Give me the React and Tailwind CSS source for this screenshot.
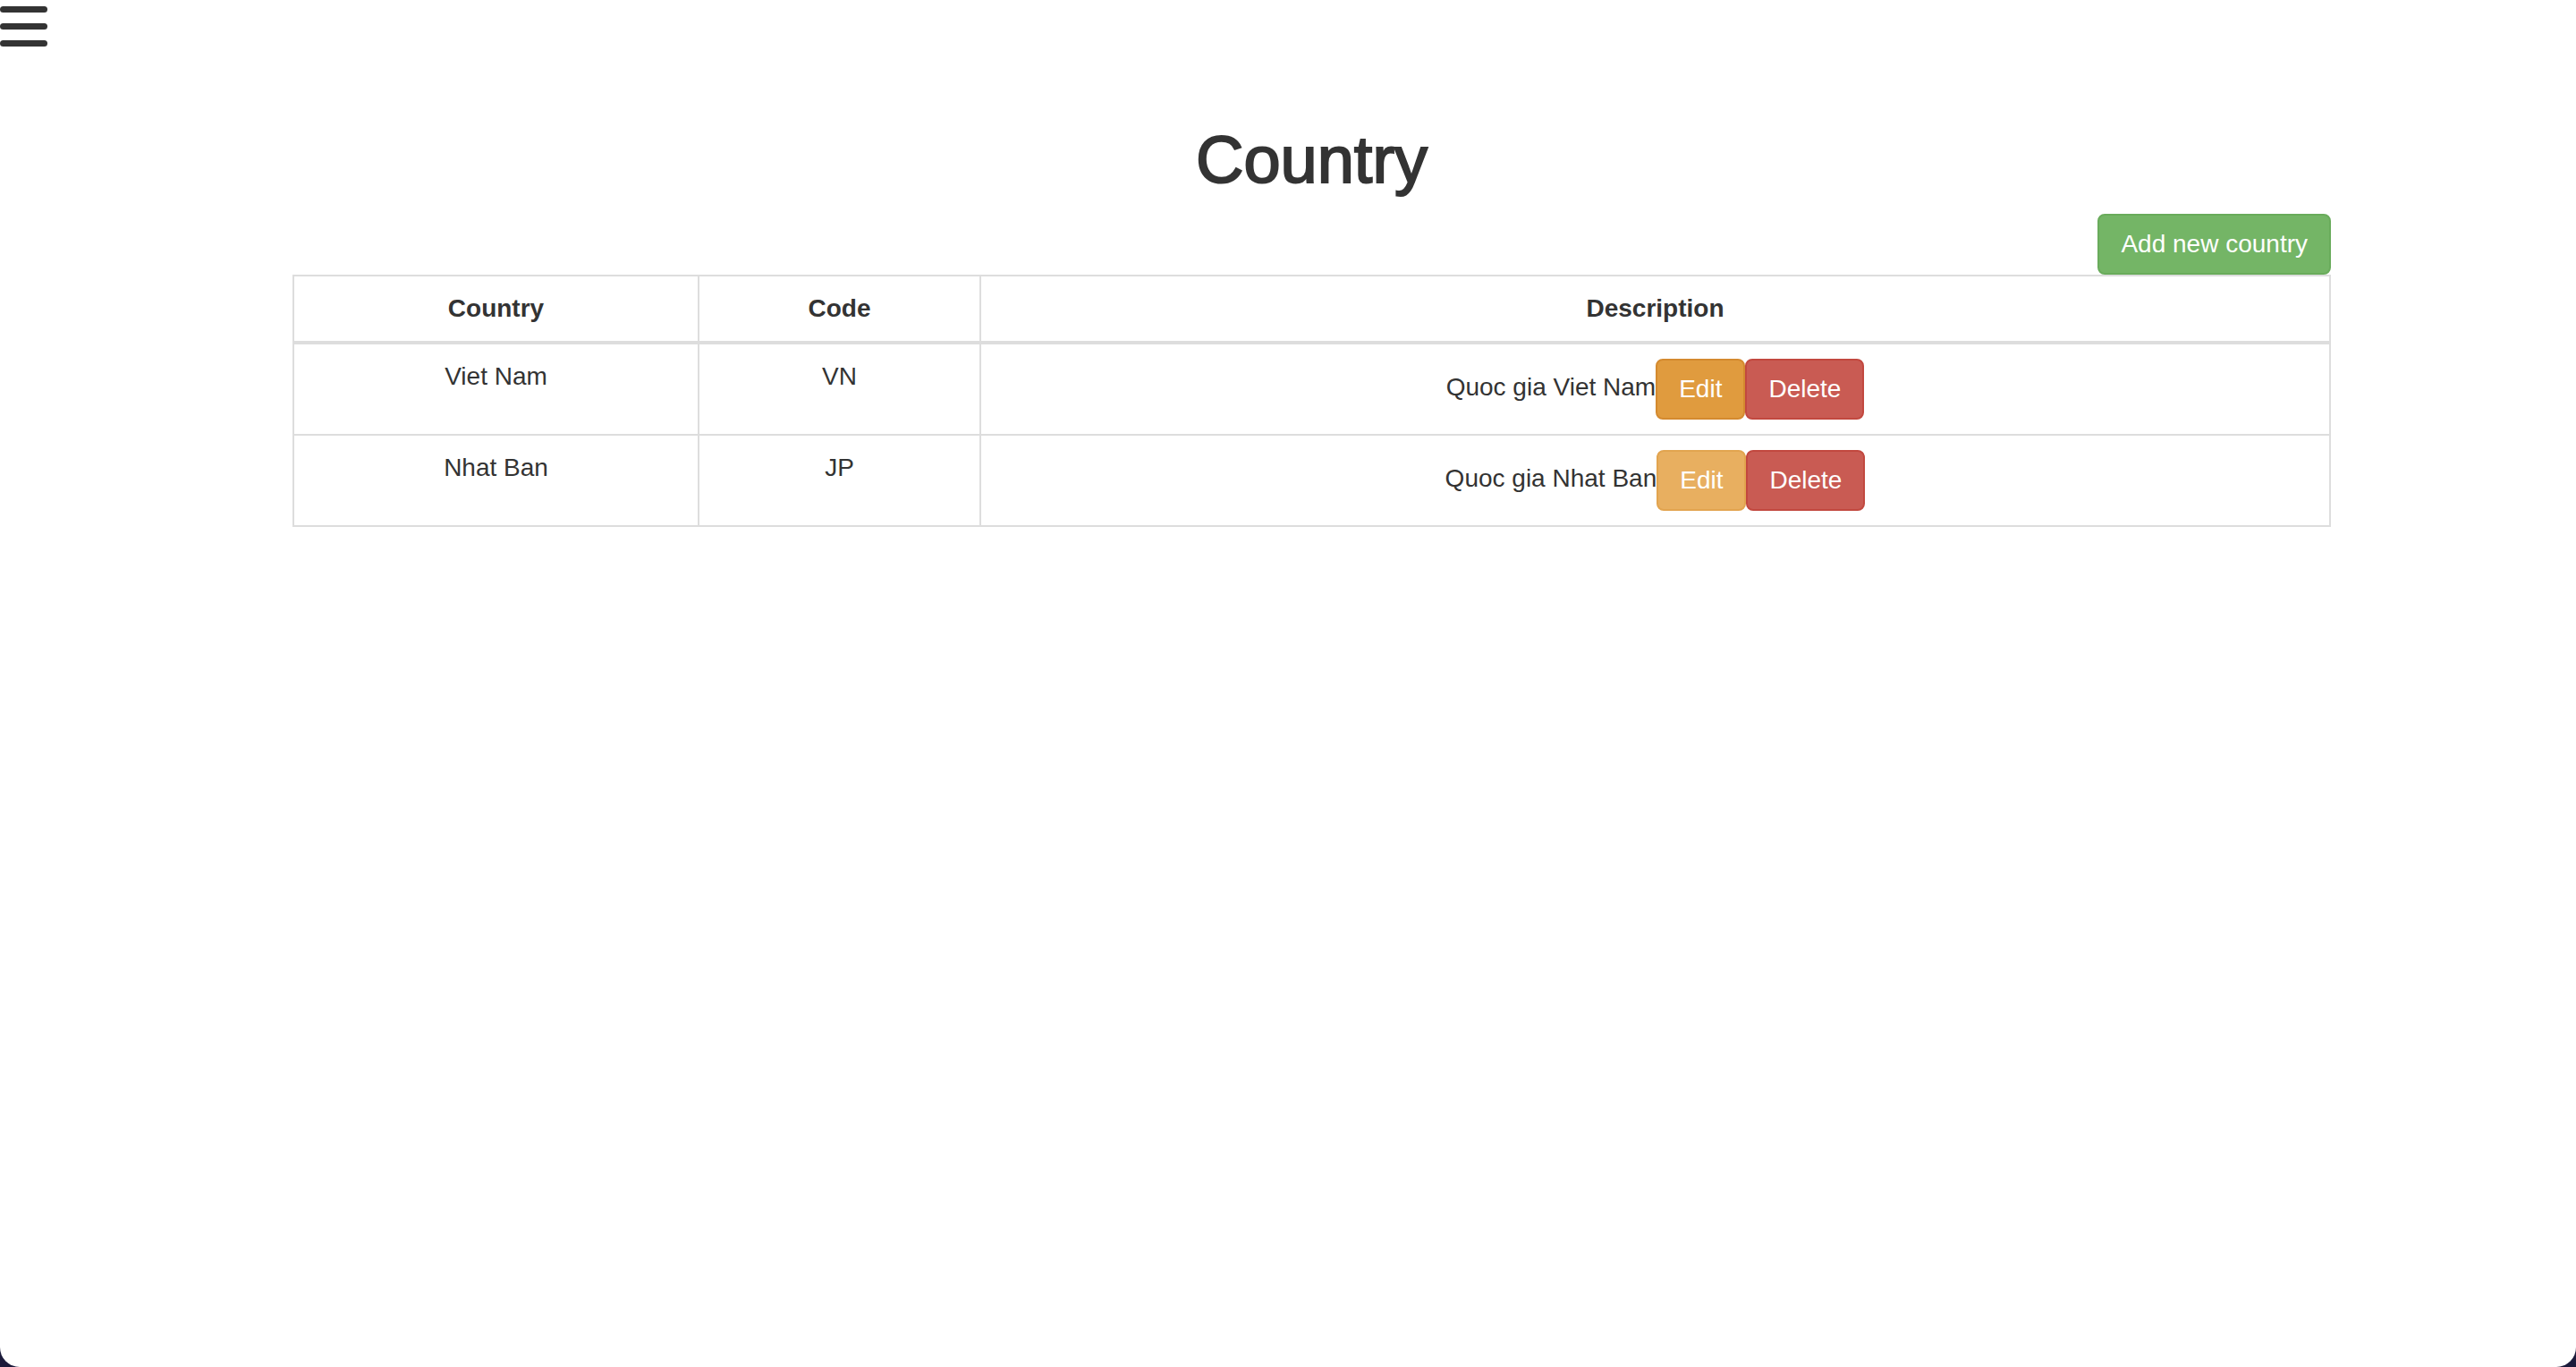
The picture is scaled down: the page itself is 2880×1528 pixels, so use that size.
const rows = [
  { name: 'Viet Nam', code: 'VN', desc: 'Quoc gia Viet Nam', editFaded: false },
  { name: 'Nhat Ban', code: 'JP', desc: 'Quoc gia Nhat Ban', editFaded: true },
];

function Hamburger() {
  return (
    <div className="flex flex-col gap-[12px] pt-[7px] w-[53px] shrink-0">
      <div className="h-[7px] w-[53px] rounded-full bg-[#333]" />
      <div className="h-[7px] w-[53px] rounded-full bg-[#333]" />
      <div className="h-[7px] w-[53px] rounded-full bg-[#333]" />
    </div>
  );
}

export default function App() {
  return (
    <div className="h-[1528px] w-full bg-[#1c1b3b] font-['Liberation_Sans',Arial,sans-serif] text-[#333]">
      <div className="h-[1528px] w-full bg-white rounded-b-[22px] flex">
        <Hamburger />
        <div className="flex-1 pt-[139px]">
          <div className="w-[2279px] mx-auto">
            <h1 className="text-center text-[74px] leading-[80px] font-medium [-webkit-text-stroke:2px_#333] mb-[20px]">Country</h1>
            <div className="flex justify-end">
              <button className="h-[68px] px-[24px] text-[28px] leading-[40px] text-white bg-[#74b566] border-2 border-[#69ab5b] rounded-[8px]">
                Add new country
              </button>
            </div>
            <table className="w-full table-fixed border-collapse text-[28px] leading-[40px]">
              <thead>
                <tr>
                  <th className="w-[453px] p-[16px] border-2 border-b-4 border-[#ddd] font-bold text-center">Country</th>
                  <th className="w-[315px] p-[16px] border-2 border-b-4 border-[#ddd] font-bold text-center">Code</th>
                  <th className="p-[16px] border-2 border-b-4 border-[#ddd] font-bold text-center">Description</th>
                </tr>
              </thead>
              <tbody>
                {rows.map((r) => (
                  <tr key={r.code}>
                    <td className="p-[16px] border-2 border-[#ddd] text-center align-top">{r.name}</td>
                    <td className="p-[16px] border-2 border-[#ddd] text-center align-top">{r.code}</td>
                    <td className="p-[16px] border-2 border-[#ddd] text-center align-top">
                      <span>{r.desc}</span>
                      <button
                        className={
                          r.editFaded
                            ? 'inline-block h-[68px] px-[24px] text-white bg-[#e8af60] border-2 border-[#e2a44f] rounded-[8px] align-middle'
                            : 'inline-block h-[68px] px-[24px] text-white bg-[#e09b3e] border-2 border-[#d48a2f] rounded-[8px] align-middle'
                        }
                      >
                        Edit
                      </button>
                      <button className="inline-block h-[68px] px-[24px] text-white bg-[#c95b53] border-2 border-[#c2483f] rounded-[8px] align-middle">
                        Delete
                      </button>
                    </td>
                  </tr>
                ))}
              </tbody>
            </table>
          </div>
        </div>
      </div>
    </div>
  );
}
